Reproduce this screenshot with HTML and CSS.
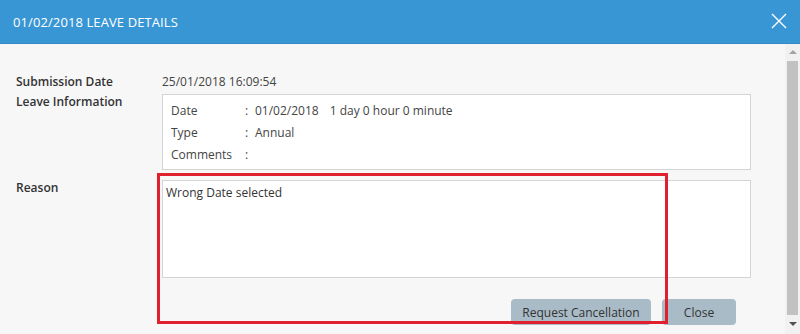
FILE: index.html
```html
<!DOCTYPE html>
<html lang="en">
<head>
  <meta charset="UTF-8" />
  <title>Leave Details</title>
  <link rel="stylesheet" href="styles.css">
</head>
<body>
  <div class="modal">
    <div class="modal-header">
      <h1>01/02/2018 LEAVE DETAILS</h1>
      <button class="close-x" type="button" aria-label="Close">
        <svg width="16" height="16" viewBox="0 0 16 16">
          <path d="M1 1 L15 15 M15 1 L1 15" stroke="#fff" stroke-width="1.4" fill="none"/>
        </svg>
      </button>
    </div>
    <div class="modal-body">
      <div class="content">
        <div class="form">
          <div class="label first">Submission Date</div>
          <div class="value first">25/01/2018 16:09:54</div>

          <div class="label">Leave Information</div>
          <div class="info-box">
            <div class="info-row"><span class="info-key">Date</span><span class="colon">:</span><span>01/02/2018<span class="gap"></span>1 day 0 hour 0 minute</span></div>
            <div class="info-row"><span class="info-key">Type</span><span class="colon">:</span><span>Annual</span></div>
            <div class="info-row"><span class="info-key">Comments</span><span class="colon">:</span></div>
          </div>

          <div class="label reason-label">Reason</div>
          <div class="reason-box">Wrong Date selected</div>
        </div>
        <div class="actions">
          <button class="btn btn-wide" type="button">Request Cancellation</button>
          <button class="btn btn-close" type="button">Close</button>
        </div>
        <!-- annotation drawn over the screenshot -->
        <div class="highlight"></div>
      </div>
      <div class="scrollbar">
        <div class="arrow up"></div>
        <div class="thumb"></div>
        <div class="arrow down"></div>
      </div>
    </div>
  </div>
</body>
</html>
```

FILE: styles.css
```css
* {
  box-sizing: border-box;
}
body {
  margin: 0;
  background: #f7f7f7;
  font-family: 'Open Sans', 'Noto Sans', sans-serif;
  font-size: 12px;
  color: #333;
}
.modal {
  width: 800px;
  height: 334px;
  overflow: hidden;
}
.modal-header {
  height: 44px;
  background: #3996d4;
  display: flex;
  align-items: center;
  justify-content: space-between;
  padding: 0 13px 0 13px;
  border-bottom: 1px solid #3289c4;
}
.modal-header h1 {
  margin: 0;
  font-size: 13px;
  font-weight: 400;
  color: #fff;
  letter-spacing: 0.1px;
}
.close-x {
  background: none;
  border: none;
  padding: 0;
  width: 16px;
  height: 16px;
  margin-bottom: 1px;
  display: flex;
}
.modal-body {
  display: flex;
  height: 290px;
}
.content {
  position: relative;
  flex: 1;
  padding: 28px 0 0 16px;
}
.form {
  display: grid;
  grid-template-columns: 146px 589px;
  row-gap: 2px;
}
.label {
  font-weight: 600;
  line-height: 16px;
  color: #333;
}
.label.first,
.value.first {
  line-height: 20px;
}
.value {
  color: #444;
}
.info-box {
  background: #fff;
  border: 1px solid #d4d4d4;
  padding: 5px 8px 3px 8px;
  color: #444;
}
.info-row {
  display: flex;
  line-height: 22px;
}
.info-key {
  width: 74px;
}
.colon {
  width: 10px;
}
.gap {
  display: inline-block;
  width: 11px;
}
.reason-label {
  margin-top: 8px;
}
.reason-box {
  margin-top: 8px;
  height: 98px;
  background: #fff;
  border: 1px solid #d4d4d4;
  padding: 4px 3px;
  line-height: 16px;
  color: #333;
}
.actions {
  display: flex;
  justify-content: flex-end;
  gap: 11px;
  width: 735px;
  padding-right: 15px;
  margin-top: 21px;
}
.btn {
  height: 26px;
  border: none;
  border-radius: 4px;
  background: #a9bbc6;
  color: #333;
  font-family: inherit;
  font-size: 12px;
  padding: 0;
}
.btn-wide {
  width: 140px;
}
.btn-close {
  width: 74px;
}
.highlight {
  position: absolute;
  left: 157px;
  top: 129px;
  width: 511px;
  height: 151px;
  border: 3px solid #e0202e;
  pointer-events: none;
}
.scrollbar {
  width: 15px;
  background: #f1f1f1;
  display: flex;
  flex-direction: column;
  align-items: center;
}
.arrow {
  width: 0;
  height: 0;
  border-left: 4px solid transparent;
  border-right: 4px solid transparent;
}
.arrow.up {
  margin: 6px 0 7px;
  border-bottom: 4px solid #a3a3a3;
}
.arrow.down {
  margin: 7px 0 0;
  border-top: 4px solid #505050;
}
.thumb {
  width: 11px;
  height: 254px;
  background: #c1c1c1;
}
```
